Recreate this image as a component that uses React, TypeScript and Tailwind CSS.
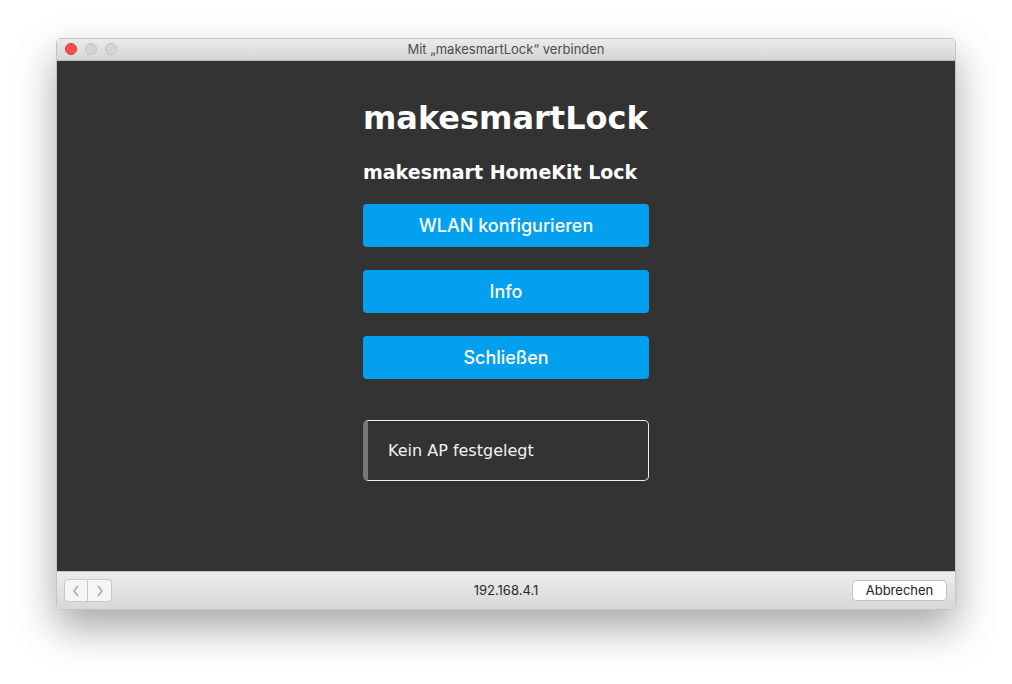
import React from "react";

export default function App() {
  return (
    <div className="w-[1012px] h-[684px] bg-white pt-[38px] pl-[56px]">
      <div className="w-[900px] h-[572px] flex flex-col rounded-[5px] overflow-hidden border border-[#c4c4c4] shadow-[0_18px_40px_rgba(0,0,0,0.35)]">
        {/* Title bar */}
        <div className="relative h-[22px] shrink-0 bg-gradient-to-b from-[#ebebeb] to-[#d5d5d5] border-b border-[#b8b8b8] flex items-center justify-center">
          <div className="absolute left-[8px] top-[4px] flex gap-[8px]">
            <div className="w-[12px] h-[12px] rounded-full bg-[#fc4f4a] border border-[#df3b36]" />
            <div className="w-[12px] h-[12px] rounded-full bg-[#d5d5d5] border border-[#c0c0c0]" />
            <div className="w-[12px] h-[12px] rounded-full bg-[#d5d5d5] border border-[#c0c0c0]" />
          </div>
          <span className="text-[13px] text-[#4d4d4d] font-['Inter',sans-serif] leading-none">
            Mit „makesmartLock“ verbinden
          </span>
        </div>
        {/* Content */}
        <div className="flex-1 bg-[#333333] flex justify-center pt-[39px]">
          <div className="w-[286px] flex flex-col font-['DejaVu_Sans','Verdana',sans-serif] text-white">
            <h1 className="text-[32px] font-bold leading-[37px] whitespace-nowrap">makesmartLock</h1>
            <h3 className="mt-[24px] text-[19px] font-bold leading-[22px] whitespace-nowrap">makesmart HomeKit Lock</h3>
            <div className="mt-[21px] flex flex-col gap-[23px]">
              {["WLAN konfigurieren", "Info", "Schließen"].map((t) => (
                <div
                  key={t}
                  className="h-[43px] rounded-[4px] bg-[#03a0f0] flex items-center justify-center text-[18px] font-medium font-['Inter',sans-serif] text-white"
                >
                  {t}
                </div>
              ))}
            </div>
            <div className="mt-[41px] h-[61px] rounded-[5px] border border-[#eeeeee] border-l-[5px] border-l-[#777777] flex items-center pl-[20px] text-[16px] text-[#f2f2f2]">
              Kein AP festgelegt
            </div>
          </div>
        </div>
        {/* Bottom bar */}
        <div className="h-[38px] shrink-0 bg-gradient-to-b from-[#ececec] to-[#d8d8d8] border-t border-[#c4c4c4] relative flex items-center justify-center">
          <div className="absolute left-[7px] top-[7px] flex">
            <div className="w-[24px] h-[23px] rounded-l-[4px] bg-[#f6f6f6] border border-[#c9c9c9] flex items-center justify-center">
              <svg width="10" height="14" viewBox="0 0 10 14">
                <path d="M7 2 L3 7 L7 12" fill="none" stroke="#a6a6a6" strokeWidth="1.5" />
              </svg>
            </div>
            <div className="w-[24px] h-[23px] rounded-r-[4px] bg-[#f6f6f6] border border-l-0 border-[#c9c9c9] flex items-center justify-center">
              <svg width="10" height="14" viewBox="0 0 10 14">
                <path d="M3 2 L7 7 L3 12" fill="none" stroke="#a6a6a6" strokeWidth="1.5" />
              </svg>
            </div>
          </div>
          <span className="text-[13px] text-[#2a2a2a] font-['Inter',sans-serif]">192.168.4.1</span>
          <div className="absolute right-[8px] top-[8px] w-[95px] h-[21px] rounded-[4px] bg-white border border-[#c4c4c4] flex items-center justify-center text-[13px] text-[#222] font-['Inter',sans-serif]">
            Abbrechen
          </div>
        </div>
      </div>
    </div>
  );
}
